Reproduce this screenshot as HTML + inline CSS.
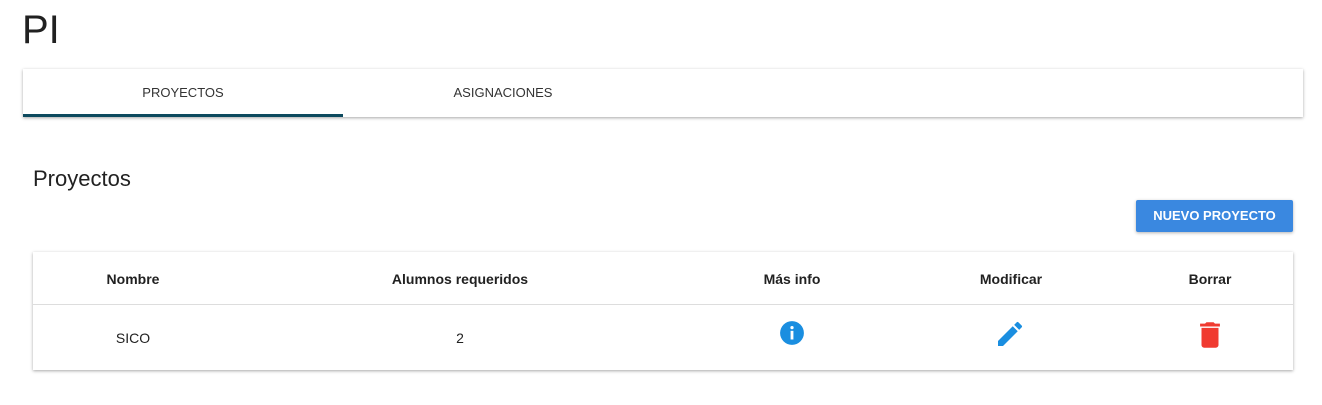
<!DOCTYPE html>
<html><head><style>
body{margin:0;background:#fff;font-family:"Liberation Sans",sans-serif;color:#212121;width:1322px;height:405px;overflow:hidden;position:relative}
.a{position:absolute}
.tabs{left:23px;top:69px;width:1280px;height:48px;background:#fff;box-shadow:0 1px 3px rgba(0,0,0,.35)}
.tab{position:absolute;top:0;height:48px;line-height:48px;font-size:13px;text-align:center;width:320px;color:#333}
.card{left:33px;top:252px;width:1260px;height:118px;background:#fff;box-shadow:0 1px 3px rgba(0,0,0,.35)}
.c{position:absolute;transform:translateX(-50%);font-size:14px;white-space:nowrap}
.h{top:19px;font-weight:bold}
.r{top:78px}
</style></head><body>
<div class="a" style="left:22px;top:8px;font-size:40px;line-height:44px;">PI</div>
<div class="a tabs">
 <div class="tab" style="left:0">PROYECTOS</div>
 <div class="tab" style="left:320px">ASIGNACIONES</div>
 <div class="a" style="left:0;top:45px;width:320px;height:3px;background:#0d4a5e"></div>
</div>
<div class="a" style="left:33px;top:166px;font-size:22px;">Proyectos</div>
<div class="a" style="left:1136px;top:200px;width:157px;height:32px;background:#3a88e0;border-radius:2px;box-shadow:0 1px 3px rgba(0,0,0,.3);color:#fff;font-size:13px;font-weight:bold;text-align:center;line-height:32px;">NUEVO PROYECTO</div>
<div class="a card">
 <div class="c h" style="left:100px">Nombre</div>
 <div class="c h" style="left:427px">Alumnos requeridos</div>
 <div class="c h" style="left:759px">Más info</div>
 <div class="c h" style="left:978px">Modificar</div>
 <div class="c h" style="left:1177px">Borrar</div>
 <div class="a" style="left:0;top:52px;width:1260px;height:1px;background:#ddd"></div>
 <div class="c r" style="left:100px">SICO</div>
 <div class="c r" style="left:427px">2</div>
 <svg class="a" style="left:746px;top:68px" width="26" height="26" viewBox="0 0 24 24"><circle cx="12" cy="12" r="11" fill="#1a8ee0"/><rect x="10.7" y="10" width="2.6" height="8" fill="#fff"/><circle cx="12" cy="7" r="1.5" fill="#fff"/></svg>
 <svg class="a" style="left:961px;top:66px" width="32" height="32" viewBox="0 0 24 24"><path fill="#1a8ee0" d="M3 17.25V21h3.75L17.81 9.94l-3.75-3.75L3 17.25zM20.71 7.04a1 1 0 000-1.41l-2.34-2.34a1 1 0 00-1.41 0l-1.83 1.83 3.75 3.75 1.83-1.83z"/></svg>
 <svg class="a" style="left:1160px;top:66px" width="34" height="34" viewBox="0 0 24 24"><path fill="#f03a30" d="M6 19c0 1.1.9 2 2 2h8c1.1 0 2-.9 2-2V7H6v12zM19 4h-3.5l-1-1h-5l-1 1H5v2h14V4z"/></svg>
</div>
</body></html>
